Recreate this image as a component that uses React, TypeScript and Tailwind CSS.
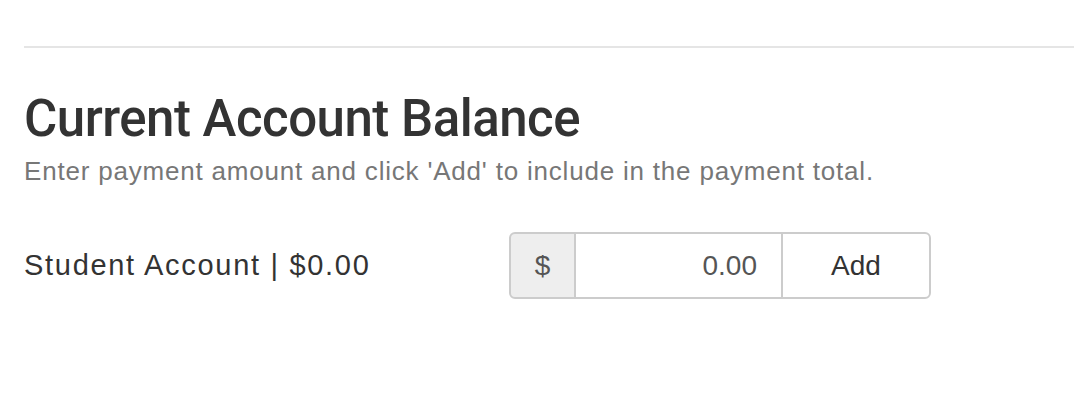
export default function App() {
  return (
    <div className="min-h-[402px] bg-white pl-6 text-[#333]" style={{ fontFamily: '"Liberation Sans", Arial, sans-serif' }}>
      <div className="pt-[46px]">
        <div className="h-[2px] bg-[#e5e5e5]" />
      </div>

      <h3
        className="mt-[43px] text-[51px] font-medium leading-[1.1] tracking-[-0.5px]"
        style={{ fontFamily: 'Roboto, "Liberation Sans", sans-serif' }}
      >
        Current Account Balance
      </h3>
      <p className="mt-[6px] text-[26px] leading-[1.42857] tracking-[0.8px] text-[#777]">
        Enter payment amount and click 'Add' to include in the payment total.
      </p>

      <div className="mt-[42px] flex items-center">
        <div className="w-[485px] text-[29px] leading-[1.42857] tracking-[1.7px]">Student Account | $0.00</div>
        <div className="flex h-[67px] w-[422px] text-[28px]">
          <span className="flex w-[67px] items-center justify-center rounded-l-[6px] border-2 border-[#ccc] bg-[#eee] text-[#555]">
            $
          </span>
          <input
            type="text"
            defaultValue="0.00"
            className="w-[205px] border-y-2 border-[#ccc] bg-white pr-6 text-right text-[28px] text-[#555] outline-none"
          />
          <button className="flex flex-1 items-center justify-center rounded-r-[6px] border-2 border-[#ccc] bg-white text-[#333]">
            Add
          </button>
        </div>
      </div>
    </div>
  );
}
